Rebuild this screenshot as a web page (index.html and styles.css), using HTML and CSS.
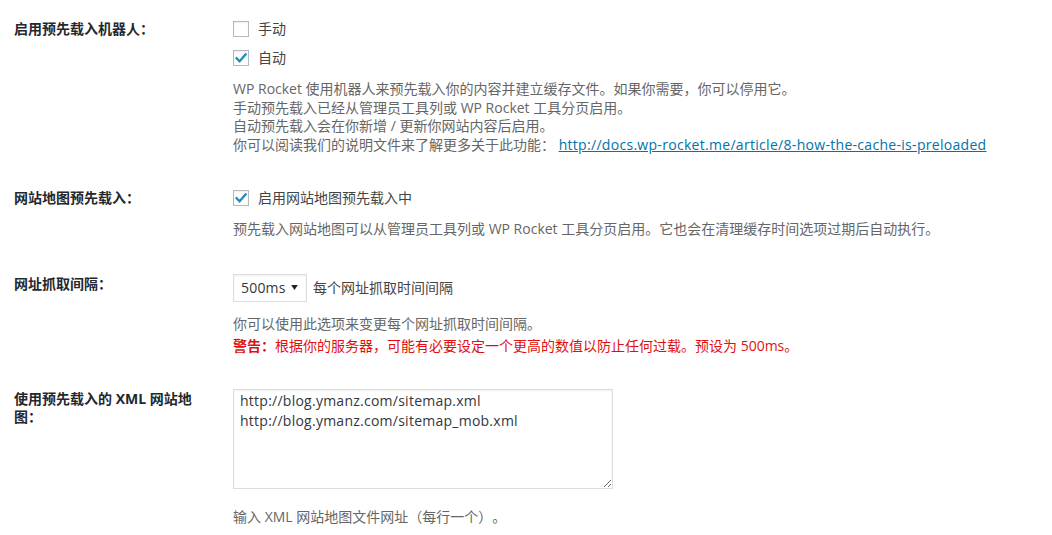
FILE: index.html
```html
<!DOCTYPE html>
<html lang="zh-CN">
<head>
<meta charset="utf-8">
<title>WP Rocket 预先载入</title>
<link rel="stylesheet" href="styles.css">
</head>
<body>
<div class="form">
  <div class="row row-bot">
    <div class="th">启用预先载入机器人：</div>
    <div class="td">
      <div class="option">
        <span class="cb"></span><span class="opt-label">手动</span>
      </div>
      <div class="option option-next">
        <span class="cb"><svg viewBox="0 0 16 16" width="16" height="16"><path d="M3.6 8.2 L6.6 11.3 L12.6 4.4" fill="none" stroke="#1e8cbe" stroke-width="2.3" stroke-linecap="square"/></svg></span><span class="opt-label">自动</span>
      </div>
      <p class="desc">WP Rocket 使用机器人来预先载入你的内容并建立缓存文件。如果你需要，你可以停用它。<br>手动预先载入已经从管理员工具列或 WP Rocket 工具分页启用。<br>自动预先载入会在你新增 / 更新你网站内容后启用。<br>你可以阅读我们的说明文件来了解更多关于此功能： <a href="#">http://docs.wp-rocket.me/article/8-how-the-cache-is-preloaded</a></p>
    </div>
  </div>

  <div class="row row-sitemap">
    <div class="th">网站地图预先载入：</div>
    <div class="td">
      <div class="option">
        <span class="cb"><svg viewBox="0 0 16 16" width="16" height="16"><path d="M3.6 8.2 L6.6 11.3 L12.6 4.4" fill="none" stroke="#1e8cbe" stroke-width="2.3" stroke-linecap="square"/></svg></span><span class="opt-label">启用网站地图预先载入中</span>
      </div>
      <p class="desc">预先载入网站地图可以从管理员工具列或 WP Rocket 工具分页启用。它也会在清理缓存时间选项过期后自动执行。</p>
    </div>
  </div>

  <div class="row row-interval">
    <div class="th th-field">网址抓取间隔：</div>
    <div class="td">
      <div class="select-line">
        <span class="select"><span class="select-val">500ms</span><svg class="arrow" viewBox="0 0 8 6" width="7" height="5"><path d="M0 0 H8 L4 6 Z" fill="#222"/></svg></span>
        <span class="opt-label select-label">每个网址抓取时间间隔</span>
      </div>
      <p class="desc">你可以使用此选项来变更每个网址抓取时间间隔。</p>
      <p class="desc warning"><strong>警告：</strong>根据你的服务器，可能有必要设定一个更高的数值以防止任何过载。预设为 500ms。</p>
    </div>
  </div>

  <div class="row row-xml">
    <div class="th th-field">使用预先载入的 XML 网站地图：</div>
    <div class="td">
      <textarea class="textarea" rows="5">http://blog.ymanz.com/sitemap.xml
http://blog.ymanz.com/sitemap_mob.xml</textarea>
      <p class="desc desc-xml">输入 XML 网站地图文件网址（每行一个）。</p>
    </div>
  </div>
</div>
</body>
</html>
```

FILE: styles.css
```css
html, body {
  margin: 0;
  padding: 0;
  background: #fff;
}

body {
  font-family: "Open Sans", "Noto Sans CJK SC", sans-serif;
  font-size: 14px;
  color: #444;
  text-spacing-trim: space-all;
}

.form {
  padding: 20px 0 0 14px;
}

.row {
  display: flex;
  align-items: flex-start;
}

.th {
  width: 185px;
  padding-right: 34px;
  font-weight: bold;
  color: #23282d;
  line-height: 18px;
  flex-shrink: 0;
}

.th-field {
  padding-top: 1px;
}

.td {
  flex: 1;
}

.row-sitemap {
  margin-top: 35px;
}

.row-interval {
  margin-top: 35px;
}

.row-xml {
  margin-top: 33px;
}

.option {
  display: flex;
  align-items: center;
  height: 18px;
  line-height: 18px;
}

.option-next {
  margin-top: 11px;
}

.cb {
  width: 16px;
  height: 16px;
  box-sizing: border-box;
  border: 1px solid #b4b9be;
  background: #fff;
  box-shadow: inset 0 1px 2px rgba(0, 0, 0, 0.07);
  display: flex;
  align-items: center;
  justify-content: center;
  flex-shrink: 0;
}

.cb svg {
  display: block;
  margin: -1px;
}

.opt-label {
  margin-left: 9px;
  color: #444;
}

.desc {
  margin: 13px 0 0;
  line-height: 18.5px;
  color: #666;
}

.desc a {
  color: #0073aa;
  text-decoration: underline;
  letter-spacing: 0.3px;
}

.warning {
  margin-top: 4px;
  color: #e01010;
}

.warning strong {
  font-weight: bold;
}

.select-line {
  display: flex;
  align-items: center;
  height: 28px;
}

.select {
  display: flex;
  align-items: center;
  box-sizing: border-box;
  width: 74px;
  height: 28px;
  padding: 0 6px 0 7px;
  border: 1px solid #ddd;
  background: #fff;
  box-shadow: inset 0 1px 2px rgba(0, 0, 0, 0.07);
  color: #32373c;
  font-size: 14px;
  letter-spacing: 0.2px;
}

.select-val {
  flex: 1;
}

.arrow {
  display: block;
  margin-right: 2px;
}

.select-label {
  margin-left: 6px;
  margin-top: -1px;
}

.textarea {
  display: block;
  box-sizing: border-box;
  width: 380px;
  height: 100px;
  margin: 0;
  padding: 1px 6px;
  border: 1px solid #ddd;
  box-shadow: inset 0 1px 2px rgba(0, 0, 0, 0.07);
  background: #fff;
  font-family: "Open Sans", "Noto Sans CJK SC", sans-serif;
  font-size: 14px;
  line-height: 20px;
  letter-spacing: 0.25px;
  color: #32373c;
  resize: both;
  outline: none;
}

.desc-xml {
  margin-top: 19px;
  line-height: 18px;
}
```
